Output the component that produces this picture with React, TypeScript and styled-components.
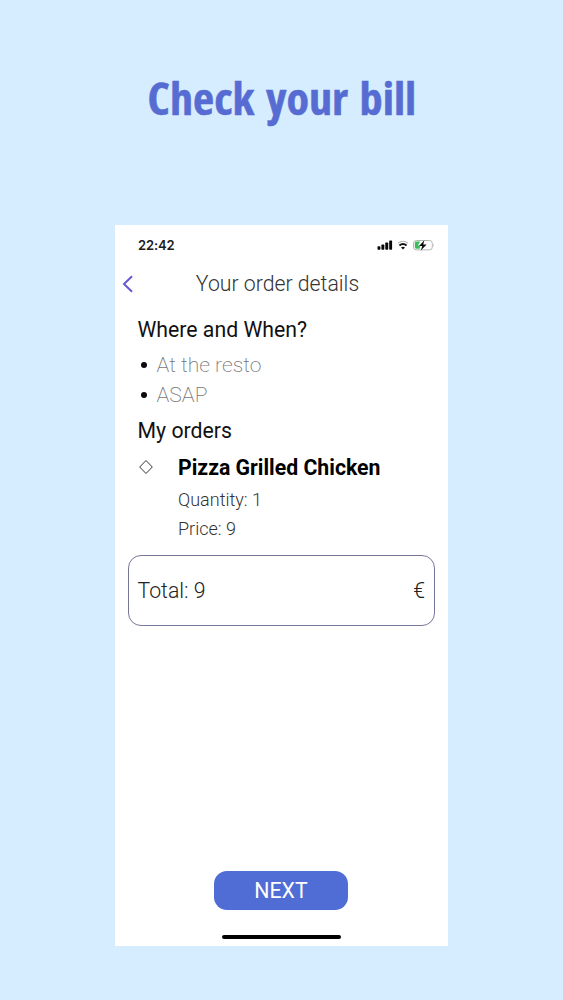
import React from 'react';
import styled, { createGlobalStyle } from 'styled-components';

const GlobalStyle = createGlobalStyle`
  * { box-sizing: border-box; }
  body { margin: 0; background: #d6edff; font-family: Roboto, "Liberation Sans", sans-serif; }
`;

const Page = styled.main`
  width: 563px;
  height: 1000px;
  background: #d6edff;
  overflow: hidden;
  display: flex;
  flex-direction: column;
  align-items: center;
`;

const Headline = styled.h1`
  margin: 68px 0 0;
  height: 157px;
  font: 700 44px/60px "Open Sans", "Noto Sans", sans-serif;
  font-stretch: 75%;
  word-spacing: 3px;
  transform: scaleX(1.05);
  -webkit-text-stroke: 0.5px #566cd2;
  color: #566cd2;
  white-space: nowrap;
`;

const Screen = styled.section`
  width: 333px;
  height: 721px;
  background: #fff;
  display: flex;
  flex-direction: column;
  align-items: stretch;
`;

const StatusBar = styled.div`
  height: 40px;
  padding: 0 13px 0 23px;
  display: flex;
  align-items: center;
  justify-content: space-between;
`;

const Clock = styled.span`
  font: 600 13px/16px Inter, sans-serif;
  letter-spacing: -0.1px;
  color: #1b1b1b;
`;

const NavBar = styled.header`
  height: 38px;
  padding: 0 7px;
  display: grid;
  grid-template-columns: 14px 1fr 22px;
  align-items: center;
  text-align: center;
`;

const Line = styled.div<{ $size: number; $height: number; $weight?: number; $color?: string }>`
  margin: 0;
  font-size: ${(p) => p.$size}px;
  line-height: ${(p) => p.$height}px;
  font-weight: ${(p) => p.$weight ?? 400};
  color: ${(p) => p.$color ?? '#111'};
  white-space: nowrap;
`;

const Content = styled.div`
  padding: 12px 23px 0 22.5px;
`;

const BulletList = styled.ul`
  list-style: none;
  margin: 5px 0 6px;
  padding: 0;
`;

const Bullet = styled.li`
  display: flex;
  align-items: center;
  gap: 9.5px;
  padding-left: 3.5px;
  &::before {
    content: '';
    width: 6px;
    height: 6px;
    border-radius: 50%;
    background: #0b0b0b;
  }
`;

const Order = styled.article`
  display: grid;
  grid-template-columns: 40.5px 1fr;
  padding-top: 5px;
`;

const Marker = styled.svg`
  margin: 8px 0 0 0.5px;
`;

const TotalBox = styled.div`
  height: 71px;
  margin: 11px 13px 0;
  padding: 0 9px 0 8.5px;
  border: 1px solid #77779a;
  border-radius: 13px;
  display: flex;
  align-items: center;
  justify-content: space-between;
`;

const Footer = styled.footer`
  margin-top: auto;
  padding-bottom: 7px;
  display: flex;
  flex-direction: column;
  align-items: center;
  gap: 25px;
`;

const NextButton = styled.button`
  width: 134px;
  height: 39px;
  margin-right: 1px;
  padding: 0;
  border: 0;
  border-radius: 13px;
  background: #506dd5;
  color: #fff;
  font: 400 21.3px/39px Roboto, sans-serif;
`;

const HomeIndicator = styled.div`
  width: 119px;
  height: 4px;
  border-radius: 2px;
  background: #000;
`;

const StatusIcons = () => (
  <svg width="58" height="12" viewBox="0 0 58 12">
    <g fill="#080808">
      <rect x="0.5" y="7.2" width="2.9" height="3.5" rx=".7" />
      <rect x="4.4" y="5.6" width="2.9" height="5.1" rx=".7" />
      <rect x="8.3" y="3.6" width="2.9" height="7.1" rx=".7" />
      <rect x="12.2" y="1.4" width="2.9" height="9.3" rx=".7" />
    </g>
    <g fill="none">
      <path d="M21 4.3Q26 .2 31 4.3" stroke="#b8b8b8" strokeWidth="1.2" />
      <path d="M22.4 6.5Q26 3.5 29.6 6.5" stroke="#111" strokeWidth="1.8" />
    </g>
    <path d="M24 8.4Q26 6.9 28 8.4L26 10.5Z" fill="#111" />
    <rect x="36.5" y="1.5" width="18.8" height="9.4" rx="2.8" fill="#fff" stroke="#b2b8b2" />
    <path d="M39.6 2.6H43.2L40.8 6.5H43.5L42.5 9.8H39.6Q37.8 9.8 37.8 8V4Q37.8 2.6 39.6 2.6Z" fill="#38bf5a" />
    <path d="M47.4 1.2L42.1 7H45.3L43.8 11.4L49.6 5.4H46.2Z" fill="#080808" />
    <path d="M56.3 4.6Q57.7 6.2 56.3 7.8Z" fill="#aaa" />
  </svg>
);

export default function App() {
  return (
    <>
      <GlobalStyle />
      <Page>
        <Headline>Check your bill</Headline>
        <Screen>
          <StatusBar>
            <Clock>22:42</Clock>
            <StatusIcons />
          </StatusBar>
          <NavBar>
            <svg width="12" height="18" viewBox="0 0 12 18">
              <path d="M10 1.2L2 9L10 16.8" fill="none" stroke="#6558d2" strokeWidth="2" />
            </svg>
            <Line as="h2" $size={21.25} $height={36} $weight={300} $color="#333">Your order details</Line>
          </NavBar>
          <Content>
            <Line $size={21.25} $height={30}>Where and When?</Line>
            <BulletList>
              <Bullet><Line $size={21.1} $height={30} $weight={200} $color="#777">At the resto</Line></Bullet>
              <Bullet><Line $size={21.1} $height={30} $weight={200} $color="#777">ASAP</Line></Bullet>
            </BulletList>
            <Line $size={21.25} $height={30}>My orders</Line>
            <Order>
              <Marker width="16" height="16" viewBox="0 0 16 16">
                <path d="M8 1.5L14.3 8L8 14.5L1.7 8Z" fill="none" stroke="#333" strokeWidth="1" />
              </Marker>
              <div>
                <Line $size={21.25} $height={34} $weight={700} $color="#000">Pizza Grilled Chicken</Line>
                <Line $size={18} $height={29} $weight={300} $color="#333">Quantity: 1</Line>
                <Line $size={18} $height={30} $weight={300} $color="#333">Price: 9</Line>
              </div>
            </Order>
          </Content>
          <TotalBox>
            <Line $size={21.25} $height={30} $weight={300} $color="#222">Total: 9</Line>
            <Line $size={21.25} $height={30} $weight={300} $color="#222">€</Line>
          </TotalBox>
          <Footer>
            <NextButton>NEXT</NextButton>
            <HomeIndicator />
          </Footer>
        </Screen>
      </Page>
    </>
  );
}
